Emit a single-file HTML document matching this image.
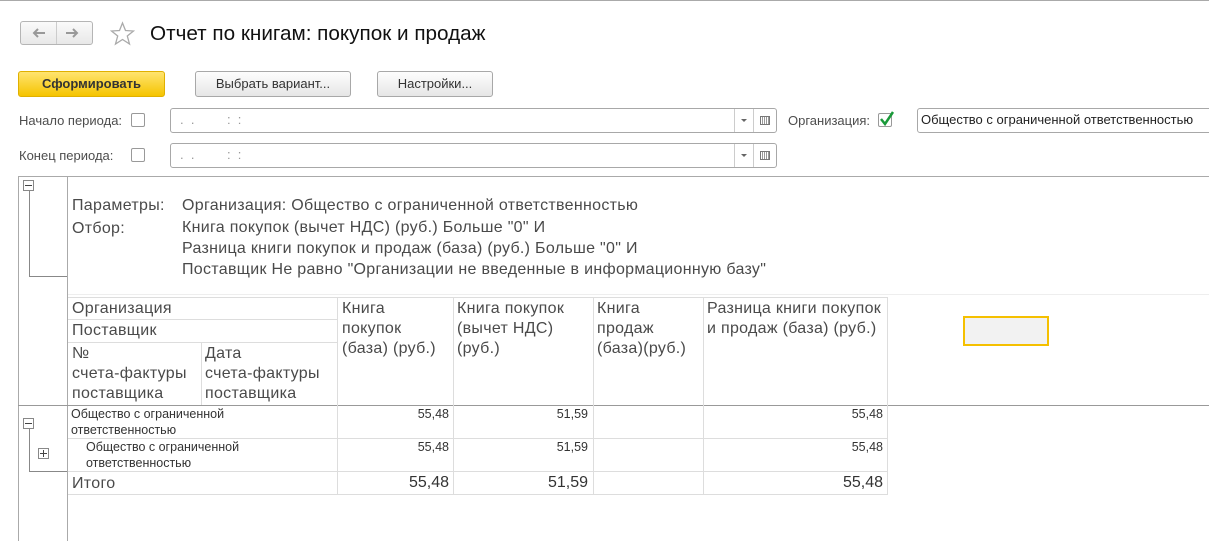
<!DOCTYPE html>
<html><head><meta charset="utf-8"><style>
*{margin:0;padding:0;box-sizing:border-box}
body{width:1209px;height:541px;background:#fff;position:relative;overflow:hidden;font-family:"Liberation Sans",Arial,sans-serif;color:#333}
.a{position:absolute}
.btn{position:absolute;border:1px solid #a8a8a8;border-radius:3px;background:linear-gradient(#fdfdfd,#e6e6e6);font-size:13px;text-align:center;line-height:24px;color:#333}
.lbl{position:absolute;font-size:13px;color:#4d4d4d}
.cb{position:absolute;width:14px;height:14px;border:1px solid #999;border-radius:2px;background:#fff}
.fld{position:absolute;border:1px solid #a8a8a8;border-radius:3px;background:#fff;height:25px}
.t{position:absolute;font-size:16px;letter-spacing:0.3px;color:#4a4a4a;line-height:23px;white-space:nowrap}
.s{position:absolute;font-size:12.5px;color:#333;line-height:16px;white-space:nowrap}
.hl{position:absolute;height:1px;background:#ddd}
.vl{position:absolute;width:1px;background:#ddd}
.num{position:absolute;text-align:right;font-size:12.5px;color:#333}
</style></head><body>
<div class="a" style="left:0;top:0;width:1209px;height:1px;background:#aaa"></div>
<div class="a" style="left:20px;top:21px;width:73px;height:24px;border:1px solid #b5b5b5;border-radius:3px;background:linear-gradient(#fafafa,#e8e8e8)"></div>
<div class="a" style="left:56px;top:22px;width:1px;height:22px;background:#ccc"></div>
<svg class="a" style="left:31px;top:27px" width="16" height="12"><path d="M14 6H3M7 2L3 6L7 10" stroke="#999" stroke-width="2" fill="none"/></svg>
<svg class="a" style="left:64px;top:27px" width="16" height="12"><path d="M2 6H13M9 2L13 6L9 10" stroke="#999" stroke-width="2" fill="none"/></svg>
<svg class="a" style="left:110px;top:21px" width="25" height="25"><path d="M12.5 2L15.5 9.5L23.5 10L17.3 15L19.5 23L12.5 18.5L5.5 23L7.7 15L1.5 10L9.5 9.5Z" fill="none" stroke="#aaa" stroke-width="1.3"/></svg>
<div class="a" style="left:150px;top:22px;font-size:20.7px;color:#111">Отчет по книгам: покупок и продаж</div>

<div class="btn" style="left:18px;top:71px;width:147px;height:26px;background:linear-gradient(#ffe470,#f5c400);border-color:#e0b000;font-weight:bold;color:#333">Сформировать</div>
<div class="btn" style="left:195px;top:71px;width:156px;height:26px">Выбрать вариант...</div>
<div class="btn" style="left:377px;top:71px;width:116px;height:26px">Настройки...</div>

<div class="lbl" style="left:19px;top:113px">Начало периода:</div>
<div class="cb" style="left:131px;top:113px"></div>
<div class="fld" style="left:170px;top:108px;width:607px"></div>
<div class="lbl" style="left:180px;top:112px;color:#999">.&nbsp;&nbsp;.&nbsp;&nbsp;&nbsp;&nbsp;&nbsp;&nbsp;&nbsp;&nbsp;&nbsp;:&nbsp;&nbsp;:</div>
<div class="a" style="left:734px;top:109px;width:1px;height:23px;background:#ccc"></div>
<div class="a" style="left:753px;top:109px;width:1px;height:23px;background:#ccc"></div>
<div class="a" style="left:741px;top:119px;border:3px solid transparent;border-top:3px solid #666"></div>
<div class="a" style="left:760px;top:116px;width:10px;height:9px;border:1px solid #777;background:repeating-linear-gradient(90deg,#fff 0 1px,#999 1px 2px)"></div>

<div class="lbl" style="left:19px;top:148px">Конец периода:</div>
<div class="cb" style="left:131px;top:148px"></div>
<div class="fld" style="left:170px;top:143px;width:607px"></div>
<div class="lbl" style="left:180px;top:147px;color:#999">.&nbsp;&nbsp;.&nbsp;&nbsp;&nbsp;&nbsp;&nbsp;&nbsp;&nbsp;&nbsp;&nbsp;:&nbsp;&nbsp;:</div>
<div class="a" style="left:734px;top:144px;width:1px;height:23px;background:#ccc"></div>
<div class="a" style="left:753px;top:144px;width:1px;height:23px;background:#ccc"></div>
<div class="a" style="left:741px;top:154px;border:3px solid transparent;border-top:3px solid #666"></div>
<div class="a" style="left:760px;top:151px;width:10px;height:9px;border:1px solid #777;background:repeating-linear-gradient(90deg,#fff 0 1px,#999 1px 2px)"></div>

<div class="lbl" style="left:788px;top:113px">Организация:</div>
<div class="cb" style="left:878px;top:113px"></div>
<svg class="a" style="left:878px;top:110px" width="18" height="18"><path d="M3 9L7 14L15 2" stroke="#1a9a3a" stroke-width="2.5" fill="none"/></svg>
<div class="fld" style="left:917px;top:108px;width:300px"></div>
<div class="a" style="left:921px;top:112px;font-size:13px;color:#222">Общество с ограниченной ответственностью</div>

<!-- report -->
<div class="a" style="left:18px;top:176px;width:1191px;height:1px;background:#aaa"></div>
<div class="a" style="left:18px;top:176px;width:1px;height:365px;background:#aaa"></div>
<div class="a" style="left:67px;top:176px;width:1px;height:365px;background:#aaa"></div>
<div class="a" style="left:18px;top:405px;width:1191px;height:1px;background:#999"></div>
<div class="a" style="left:23px;top:180px;width:11px;height:11px;border:1px solid #888;background:#fff"></div>
<div class="a" style="left:25px;top:185px;width:7px;height:1px;background:#444"></div>
<div class="a" style="left:29px;top:191px;width:1px;height:85px;background:#888"></div>
<div class="a" style="left:29px;top:276px;width:38px;height:1px;background:#888"></div>
<div class="a" style="left:68px;top:294px;width:1141px;height:1px;background:#eee"></div>

<div class="t" style="left:72px;top:194px">Параметры:</div>
<div class="t" style="left:182px;top:194px">Организация: Общество с ограниченной ответственностью</div>
<div class="t" style="left:72px;top:217px">Отбор:</div>
<div class="t" style="left:182px;top:217px;line-height:21px">Книга покупок (вычет НДС) (руб.) Больше "0" И<br>Разница книги покупок и продаж (база) (руб.) Больше "0" И<br>Поставщик Не равно "Организации не введенные в информационную базу"</div>

<!-- header grid -->
<div class="hl" style="left:68px;top:297px;width:820px"></div>
<div class="hl" style="left:68px;top:319px;width:270px"></div>
<div class="hl" style="left:68px;top:342px;width:270px"></div>
<div class="vl" style="left:201px;top:342px;height:63px"></div>
<div class="vl" style="left:337px;top:297px;height:198px"></div>
<div class="vl" style="left:453px;top:297px;height:198px"></div>
<div class="vl" style="left:593px;top:297px;height:198px"></div>
<div class="vl" style="left:703px;top:297px;height:198px"></div>
<div class="vl" style="left:887px;top:297px;height:198px"></div>
<div class="t" style="left:72px;top:298px;line-height:22px">Организация</div>
<div class="t" style="left:72px;top:320px;line-height:22px">Поставщик</div>
<div class="t" style="left:72px;top:344px;line-height:20px">№<br>счета-фактуры<br>поставщика</div>
<div class="t" style="left:205px;top:344px;line-height:20px">Дата<br>счета-фактуры<br>поставщика</div>
<div class="t" style="left:342px;top:299px;line-height:20px">Книга<br>покупок<br>(база) (руб.)</div>
<div class="t" style="left:457px;top:299px;line-height:20px">Книга покупок<br>(вычет НДС)<br>(руб.)</div>
<div class="t" style="left:597px;top:299px;line-height:20px">Книга<br>продаж<br>(база)(руб.)</div>
<div class="t" style="left:707px;top:299px;line-height:20px">Разница книги покупок<br>и продаж (база) (руб.)</div>
<div class="a" style="left:963px;top:316px;width:86px;height:30px;border:2px solid #f5c000;background:#f2f2f2"></div>

<!-- data -->
<div class="hl" style="left:68px;top:438px;width:820px"></div>
<div class="hl" style="left:68px;top:471px;width:820px"></div>
<div class="hl" style="left:68px;top:494px;width:820px"></div>
<div class="a" style="left:23px;top:418px;width:11px;height:11px;border:1px solid #888;background:#fff"></div>
<div class="a" style="left:25px;top:423px;width:7px;height:1px;background:#444"></div>
<div class="a" style="left:29px;top:429px;width:1px;height:42px;background:#888"></div>
<div class="a" style="left:29px;top:471px;width:38px;height:1px;background:#888"></div>
<div class="a" style="left:38px;top:448px;width:11px;height:11px;border:1px solid #888;background:#fff"></div>
<div class="a" style="left:40px;top:453px;width:7px;height:1px;background:#444"></div>
<div class="a" style="left:43px;top:450px;width:1px;height:7px;background:#444"></div>

<div class="s" style="left:71px;top:406px">Общество с ограниченной<br>ответственностью</div>
<div class="s" style="left:86px;top:439px">Общество с ограниченной<br>ответственностью</div>
<div class="t" style="left:72px;top:472px">Итого</div>
<div class="num" style="left:340px;top:407px;width:109px">55,48</div>
<div class="num" style="left:456px;top:407px;width:132px">51,59</div>
<div class="num" style="left:706px;top:407px;width:177px">55,48</div>
<div class="num" style="left:340px;top:440px;width:109px">55,48</div>
<div class="num" style="left:456px;top:440px;width:132px">51,59</div>
<div class="num" style="left:706px;top:440px;width:177px">55,48</div>
<div class="num" style="left:340px;top:474px;width:109px;font-size:16px">55,48</div>
<div class="num" style="left:456px;top:474px;width:132px;font-size:16px">51,59</div>
<div class="num" style="left:706px;top:474px;width:177px;font-size:16px">55,48</div>
</body></html>
